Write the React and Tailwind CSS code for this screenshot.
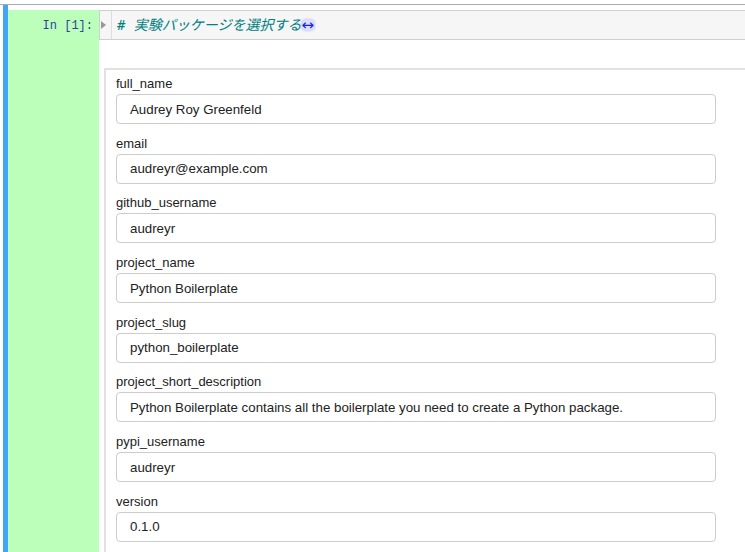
import React from "react";

const fields = [
  ["full_name", "Audrey Roy Greenfeld"],
  ["email", "audreyr@example.com"],
  ["github_username", "audreyr"],
  ["project_name", "Python Boilerplate"],
  ["project_slug", "python_boilerplate"],
  ["project_short_description", "Python Boilerplate contains all the boilerplate you need to create a Python package."],
  ["pypi_username", "audreyr"],
  ["version", "0.1.0"],
];

export default function App() {
  return (
    <div className="w-[745px] h-[552px] overflow-hidden bg-white" style={{ fontFamily: '"Liberation Sans", Arial, sans-serif' }}>
      <div className="h-[4px]" />
      <div className="h-px bg-[#ababab]" />
      <div className="flex h-[600px]">
        <div className="w-[3px]" />
        <div className="w-[5px] bg-[#42a5f5]" />
        <div className="flex-1 flex flex-col">
          <div className="h-[5px]" />
          <div className="flex flex-1">
            <div className="w-[91px] bg-[#bbffbb] flex justify-end pt-[8px] pr-[6px]">
              <span className="text-[12px] leading-[16px] text-[#303f9f]" style={{ fontFamily: '"Liberation Mono", monospace' }}>In [1]:</span>
            </div>
            <div className="flex-1 flex flex-col min-w-0">
              <div className="h-[30px] bg-[#f6f6f6] border-t border-b border-l border-[#cfcfcf] flex items-stretch">
                <div className="w-[12px] border-r border-[#dddddd] flex items-center pl-[1px]">
                  <svg width="6" height="8" viewBox="0 0 6 8"><path d="M0 0 L5 4 L0 8 Z" fill="#999" /></svg>
                </div>
                <div className="flex items-center pl-[5px] text-[14px] italic text-[#008080]" style={{ fontFamily: '"DejaVu Sans Mono", "Noto Sans CJK JP", monospace' }}>
                  <span># 実験パッケージを選択する</span>
                  <span className="not-italic text-[#1a1aff] text-[15px] leading-[10px] bg-[#e0e0ff] rounded-sm shadow-[0_0_3px_#9999ff]" style={{ fontFamily: '"DejaVu Sans", sans-serif' }}>↔</span>
                </div>
              </div>
              <div className="h-[28px]" />
              <div className="ml-[5px] border-t-2 border-l-2 border-[#e2e2e2] flex-1 pt-[4px] pl-[10px]">
                {fields.map(([label, value], i) => (
                  <div key={label} className={i === 0 ? "" : "mt-[9.7px]"}>
                    <div className="text-[13px] leading-[19px] text-[#222] mb-[1px]">{label}</div>
                    <div className="w-[600px] h-[30px] border border-[#cccccc] rounded-[4px] flex items-center pl-[13px] pt-[1px] text-[13.3px] text-[#222]">
                      {value}
                    </div>
                  </div>
                ))}
              </div>
            </div>
          </div>
        </div>
      </div>
    </div>
  );
}
